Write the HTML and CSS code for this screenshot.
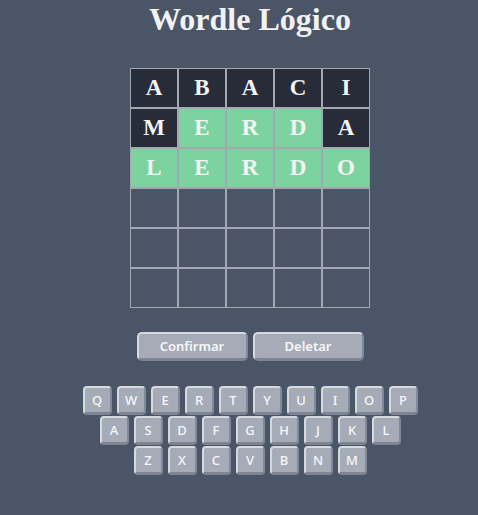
FILE: index.html
```html
<!DOCTYPE html>
<html lang="pt">
<head>
<meta charset="utf-8">
<title>Wordle Lógico</title>
<link rel="stylesheet" href="styles.css">
</head>
<body>
<main class="page">
  <h1 class="title">Wordle Lógico</h1>
  <div class="board">
    <div class="cell dark">A</div><div class="cell dark">B</div><div class="cell dark">A</div><div class="cell dark">C</div><div class="cell dark">I</div>
    <div class="cell dark">M</div><div class="cell green">E</div><div class="cell green">R</div><div class="cell green">D</div><div class="cell dark">A</div>
    <div class="cell green">L</div><div class="cell green">E</div><div class="cell green">R</div><div class="cell green">D</div><div class="cell green">O</div>
    <div class="cell"></div><div class="cell"></div><div class="cell"></div><div class="cell"></div><div class="cell"></div>
    <div class="cell"></div><div class="cell"></div><div class="cell"></div><div class="cell"></div><div class="cell"></div>
    <div class="cell"></div><div class="cell"></div><div class="cell"></div><div class="cell"></div><div class="cell"></div>
  </div>
  <div class="actions">
    <button class="btn">Confirmar</button>
    <button class="btn">Deletar</button>
  </div>
  <div class="keyboard">
    <div class="krow">
      <button class="key">Q</button><button class="key">W</button><button class="key">E</button><button class="key">R</button><button class="key">T</button><button class="key">Y</button><button class="key">U</button><button class="key">I</button><button class="key">O</button><button class="key">P</button>
    </div>
    <div class="krow">
      <button class="key">A</button><button class="key">S</button><button class="key">D</button><button class="key">F</button><button class="key">G</button><button class="key">H</button><button class="key">J</button><button class="key">K</button><button class="key">L</button>
    </div>
    <div class="krow">
      <button class="key">Z</button><button class="key">X</button><button class="key">C</button><button class="key">V</button><button class="key">B</button><button class="key">N</button><button class="key">M</button>
    </div>
  </div>
</main>
</body>
</html>
```

FILE: styles.css
```css
html, body {
  margin: 0;
  padding: 0;
  background: #4a5568;
}

.page {
  box-sizing: border-box;
  width: 100%;
  padding-left: 22px;
  display: flex;
  flex-direction: column;
  align-items: center;
}

.title {
  margin: 0;
  padding-top: 1px;
  font-family: "Liberation Serif", serif;
  font-size: 32px;
  font-weight: bold;
  line-height: 36px;
  color: #f2f2f2;
}

.board {
  margin-top: 31px;
  display: grid;
  grid-template-columns: repeat(5, 48px);
  grid-auto-rows: 40px;
}

.cell {
  box-sizing: border-box;
  border: 1px solid #a2a7b1;
  display: flex;
  align-items: center;
  justify-content: center;
  font-family: "Liberation Serif", serif;
  font-weight: bold;
  font-size: 23px;
  color: #f4f4f4;
}

.cell.dark {
  background: #272c39;
}

.cell.green {
  background: #7cd3a0;
}

.actions {
  margin-top: 24px;
  display: flex;
  gap: 5px;
}

.btn,
.key {
  box-sizing: border-box;
  background: #a5abb7;
  color: #f7f7f7;
  font-family: "Noto Sans", sans-serif;
  font-weight: 600;
  border-style: solid;
  border-width: 2px 2px 3px 2px;
  border-color: #d6d9de #838996 #7e8491 #d6d9de;
  padding: 0;
  cursor: pointer;
}

.btn {
  width: 111px;
  height: 29px;
  border-radius: 5px;
  font-size: 13px;
}

.keyboard {
  margin-top: 25px;
  display: flex;
  flex-direction: column;
  align-items: center;
  gap: 1px;
}

.krow {
  display: flex;
  gap: 5px;
}

.key {
  width: 29px;
  height: 29px;
  border-radius: 4px;
  font-size: 13px;
  font-weight: 500;
}
```
